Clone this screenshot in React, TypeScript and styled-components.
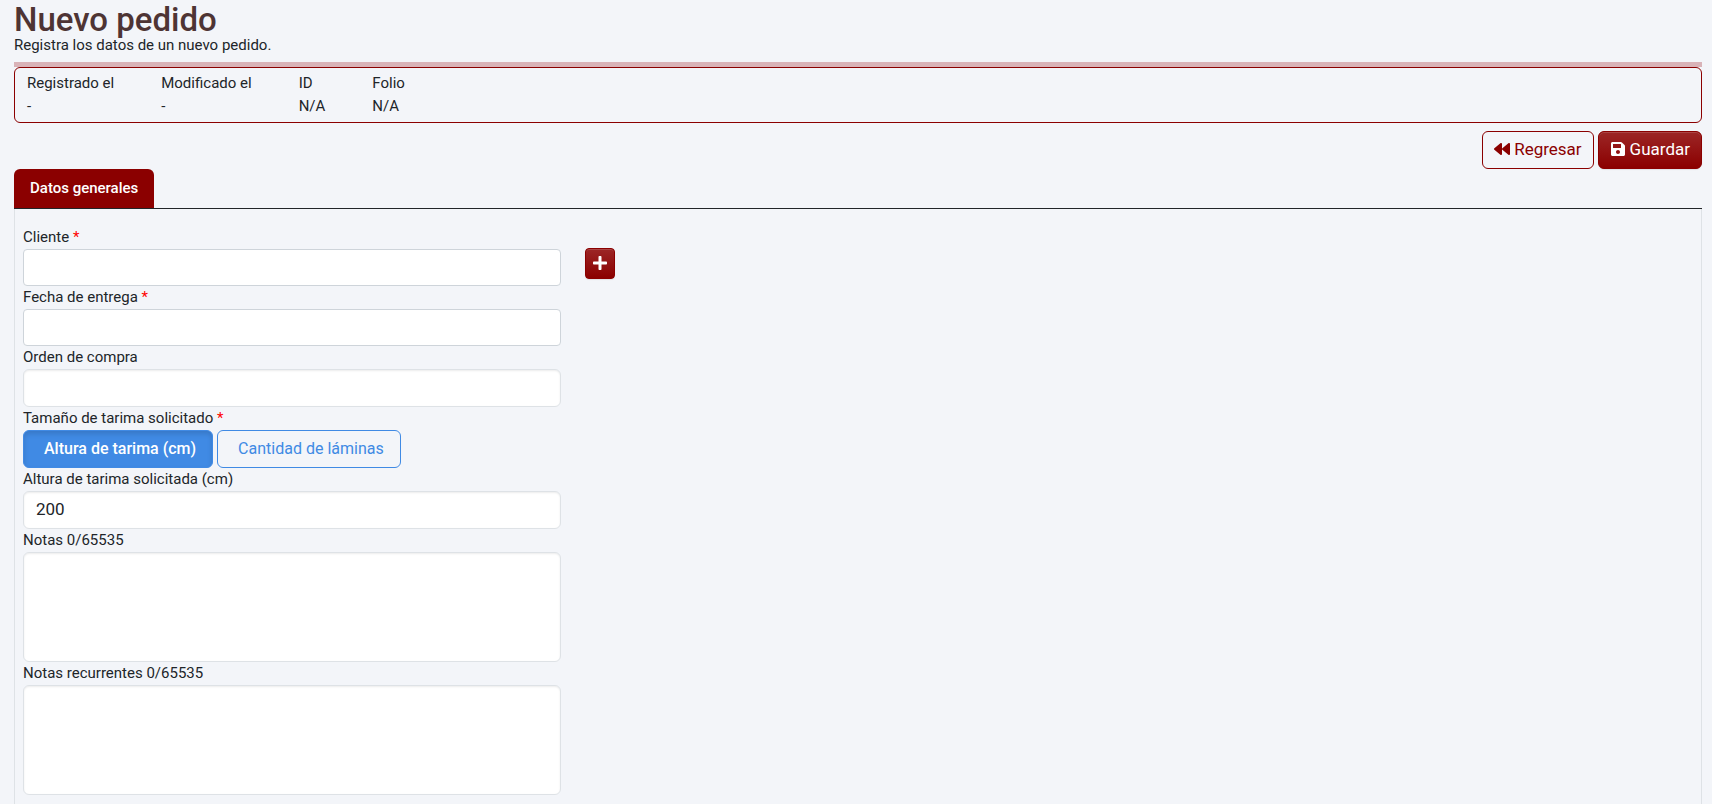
import React, { useState } from "react";
import styled, { createGlobalStyle, css } from "styled-components";
import { FaBackward, FaPlus, FaSave } from "react-icons/fa";

const GlobalStyle = createGlobalStyle`
  *, *::before, *::after { box-sizing: border-box; }
  body {
    margin: 0;
    background: #f3f5f9;
    color: #212529;
    font-family: Roboto, "Liberation Sans", sans-serif;
    font-size: 15px;
    line-height: 23px;
  }
  button, input, textarea { font-family: inherit; }
`;

const Page = styled.div`
  display: flex;
  flex-direction: column;
  min-height: 100vh;
  padding: 0 10px 0 14px;
`;

const Header = styled.header`
  padding: 4px 0 8px;
  border-bottom: 5px solid #d9b3b8;
`;

const Title = styled.h1`
  margin: 0;
  color: #4e3434;
  font-size: 33px;
  font-weight: 500;
  line-height: 32px;
`;

const Subtitle = styled.p`
  margin: 0;
  line-height: 18px;
`;

const Summary = styled.dl`
  display: flex;
  gap: 47px;
  margin: 0;
  padding: 4px 12px;
  border: 1px solid #8b0000;
  border-radius: 6px;
`;

const SummaryItem = styled.div`
  dt, dd { margin: 0; }
`;

const Actions = styled.div`
  display: flex;
  justify-content: flex-end;
  gap: 4px;
  margin-top: 8px;
`;

const solidRed = css`
  color: #fff;
  background: #8b0000 linear-gradient(180deg, #9c2626, #8b0000);
  box-shadow: inset 0 1px 0 rgba(255, 255, 255, 0.15), 0 1px 1px rgba(0, 0, 0, 0.08);
`;

const Button = styled.button<{ $solid?: boolean }>`
  display: inline-flex;
  align-items: center;
  gap: 4px;
  height: 38px;
  padding: 0 11px 2px;
  border: 1px solid #8b0000;
  border-radius: 6px;
  background: transparent;
  color: #8b0000;
  font-size: 17px;
  line-height: 24px;
  cursor: pointer;
  ${(p) => p.$solid && solidRed}
`;

const AddButton = styled.button`
  display: inline-flex;
  align-items: center;
  justify-content: center;
  width: 30px;
  height: 31px;
  margin-top: 22px;
  padding: 0 0 2px;
  border: 1px solid #8b0000;
  border-radius: 4px;
  font-size: 16px;
  cursor: pointer;
  ${solidRed}
`;

const Tabs = styled.div`
  display: flex;
  border-bottom: 1px solid #212529;
`;

const Tab = styled.button`
  height: 39px;
  padding: 0 16px 2px;
  border: 0;
  border-radius: 6px 6px 0 0;
  background: #8b0000;
  color: #fff;
  font-size: 15px;
  font-weight: 500;
  cursor: pointer;
`;

const Panel = styled.form`
  flex: 1;
  padding: 17px 16px 8px 8px;
  border: solid #dee2e6;
  border-width: 0 1px;
`;

const Row = styled.div`
  display: grid;
  grid-template-columns: repeat(3, minmax(0, 1fr));
  gap: 24px;
`;

const Field = styled.div`
  display: flex;
  flex-direction: column;
`;

const Label = styled.label`
  line-height: 23px;
`;

const Required = styled.span`
  color: #f00;
`;

const control = css`
  width: 100%;
  padding: 5px 12px 7px;
  border: 1px solid #dee2e6;
  border-radius: 6px;
  background: #fff;
  box-shadow: inset 0 1px 2px rgba(0, 0, 0, 0.08);
  color: #212529;
  font-size: 17px;
  line-height: 24px;
`;

const Input = styled.input<{ $picker?: boolean }>`
  ${control}
  height: 38px;
  ${(p) =>
    p.$picker &&
    css`
      height: 37px;
      border-color: #ced4da;
      border-radius: 4px;
      box-shadow: none;
    `}
`;

const TextArea = styled.textarea`
  ${control}
  display: block;
  height: 110px;
  resize: none;
`;

const OptionSet = styled.fieldset`
  min-width: 0;
  margin: 0;
  padding: 0;
  border: 0;
  legend { padding: 0; }
`;

const Options = styled.div`
  display: flex;
  gap: 4px;
`;

const Option = styled.label<{ $active: boolean }>`
  display: flex;
  align-items: center;
  height: 38px;
  padding: 0 16px 2px 20px;
  border: 1px solid #408ae4;
  border-radius: 6px;
  color: ${(p) => (p.$active ? "#fff" : "#408ae4")};
  background: ${(p) => (p.$active ? "#408ae4" : "transparent")};
  box-shadow: ${(p) => (p.$active ? "inset 0 3px 5px rgba(0, 0, 0, 0.125)" : "none")};
  font-size: 16px;
  font-weight: ${(p) => (p.$active ? 500 : 400)};
  cursor: pointer;
`;

const Radio = styled.input`
  appearance: none;
  width: 0;
  height: 0;
  margin: 0;
`;

const summary = [
  ["Registrado el", "-"],
  ["Modificado el", "-"],
  ["ID", "N/A"],
  ["Folio", "N/A"],
];

const sizes = ["Altura de tarima (cm)", "Cantidad de láminas"];
const LIMIT = 65535;

export default function App() {
  const [size, setSize] = useState(sizes[0]);
  const [height, setHeight] = useState("200");
  const [notes, setNotes] = useState("");
  const [recurring, setRecurring] = useState("");

  return (
    <>
      <GlobalStyle />
      <Page>
        <Header>
          <Title>Nuevo pedido</Title>
          <Subtitle>Registra los datos de un nuevo pedido.</Subtitle>
        </Header>
        <Summary>
          {summary.map(([term, value]) => (
            <SummaryItem key={term}>
              <dt>{term}</dt>
              <dd>{value}</dd>
            </SummaryItem>
          ))}
        </Summary>
        <Actions>
          <Button type="button"><FaBackward size={16} />Regresar</Button>
          <Button type="submit" form="pedido" $solid><FaSave size={16} />Guardar</Button>
        </Actions>
        <Tabs role="tablist">
          <Tab type="button" role="tab" aria-selected>Datos generales</Tab>
        </Tabs>
        <Panel id="pedido" onSubmit={(e) => e.preventDefault()}>
          <Row>
            <Field>
              <Label htmlFor="cliente">Cliente <Required>*</Required></Label>
              <Input id="cliente" $picker />
            </Field>
            <div>
              <AddButton type="button" aria-label="Agregar cliente"><FaPlus /></AddButton>
            </div>
          </Row>
          <Row>
            <Field>
              <Label htmlFor="fecha">Fecha de entrega <Required>*</Required></Label>
              <Input id="fecha" $picker />
              <Label htmlFor="orden">Orden de compra</Label>
              <Input id="orden" />
              <OptionSet>
                <legend>Tamaño de tarima solicitado <Required>*</Required></legend>
                <Options>
                  {sizes.map((s) => (
                    <Option key={s} $active={size === s}>
                      <Radio type="radio" name="tamano" checked={size === s} onChange={() => setSize(s)} />
                      {s}
                    </Option>
                  ))}
                </Options>
              </OptionSet>
              <Label htmlFor="altura">Altura de tarima solicitada (cm)</Label>
              <Input id="altura" value={height} onChange={(e) => setHeight(e.target.value)} />
              <Label htmlFor="notas">Notas {notes.length}/{LIMIT}</Label>
              <TextArea id="notas" maxLength={LIMIT} value={notes} onChange={(e) => setNotes(e.target.value)} />
              <Label htmlFor="recurrentes">Notas recurrentes {recurring.length}/{LIMIT}</Label>
              <TextArea id="recurrentes" maxLength={LIMIT} value={recurring} onChange={(e) => setRecurring(e.target.value)} />
            </Field>
          </Row>
        </Panel>
      </Page>
    </>
  );
}
